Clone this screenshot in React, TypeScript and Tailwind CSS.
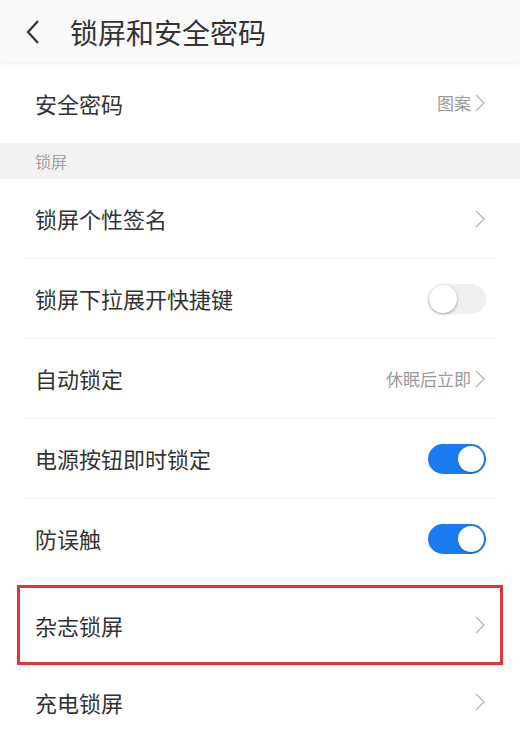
import React from "react";

const font = { fontFamily: '"Noto Sans CJK SC", "Noto Sans", sans-serif' };

function Chevron() {
  return (
    <svg width="12" height="20" viewBox="0 0 12 20" className="shrink-0">
      <path d="M2 2 L10 10 L2 18" fill="none" stroke="#b8b8b8" strokeWidth="1.4" />
    </svg>
  );
}

function Toggle({ on }: { on: boolean }) {
  return on ? (
    <div className="w-[58px] h-[30px] rounded-full bg-[#1a7cf4] flex items-center justify-end pr-[2px]">
      <div className="w-[26px] h-[26px] rounded-full bg-white shadow-[0_1px_2px_rgba(0,0,0,0.25)]" />
    </div>
  ) : (
    <div className="w-[58px] h-[30px] rounded-full bg-[#efefef] flex items-center justify-start pl-[1px]">
      <div className="w-[28px] h-[28px] rounded-full bg-white shadow-[0_1px_3px_rgba(0,0,0,0.35)]" />
    </div>
  );
}

function Row({
  label,
  right,
  divider = true,
}: {
  label: string;
  right: React.ReactNode;
  divider?: boolean;
}) {
  return (
    <div>
      <div className="h-[79px] flex items-center justify-between pl-[35px] pr-[34px]">
        <span className="text-[22px] text-[#333]">{label}</span>
        {right}
      </div>
      {divider && <div className="mx-[24px] h-px bg-[#eeeeee]" />}
    </div>
  );
}

function Value({ text }: { text: string }) {
  return (
    <div className="flex items-center gap-[3px]">
      <span className="text-[17px] text-[#9a9a9a]">{text}</span>
      <Chevron />
    </div>
  );
}

export default function App() {
  return (
    <div className="w-[520px] h-[733px] bg-white overflow-hidden" style={font}>
      <div className="h-[63px] bg-[#fafafa] flex items-center shadow-[0_1px_2px_rgba(0,0,0,0.06)] relative z-10">
        <svg width="16" height="26" viewBox="0 0 16 26" className="ml-[25px]">
          <path d="M13 2 L3 13 L13 24" fill="none" stroke="#333" strokeWidth="2.2" />
        </svg>
        <span className="ml-[29px] text-[28px] text-[#333]">锁屏和安全密码</span>
      </div>
      <div className="h-[80px] flex items-center justify-between pl-[35px] pr-[34px]">
        <span className="text-[22px] text-[#333]">安全密码</span>
        <Value text="图案" />
      </div>
      <div className="h-[36px] bg-[#f2f2f2] flex items-center pl-[35px]">
        <span className="text-[16px] text-[#a0a0a0]">锁屏</span>
      </div>
      <Row label="锁屏个性签名" right={<Chevron />} />
      <Row label="锁屏下拉展开快捷键" right={<Toggle on={false} />} />
      <Row label="自动锁定" right={<Value text="休眠后立即" />} />
      <Row label="电源按钮即时锁定" right={<Toggle on={true} />} />
      <Row label="防误触" right={<Toggle on={true} />} />
      <div className="px-[17px] pt-[6px]">
        <div className="h-[80px] border-[3px] border-[#e3343a] flex items-center justify-between pl-[15px] pr-[14px]">
          <span className="text-[22px] text-[#333]">杂志锁屏</span>
          <Chevron />
        </div>
      </div>
      <div className="h-[74px] flex items-center justify-between pl-[35px] pr-[34px]">
        <span className="text-[22px] text-[#333]">充电锁屏</span>
        <Chevron />
      </div>
    </div>
  );
}
